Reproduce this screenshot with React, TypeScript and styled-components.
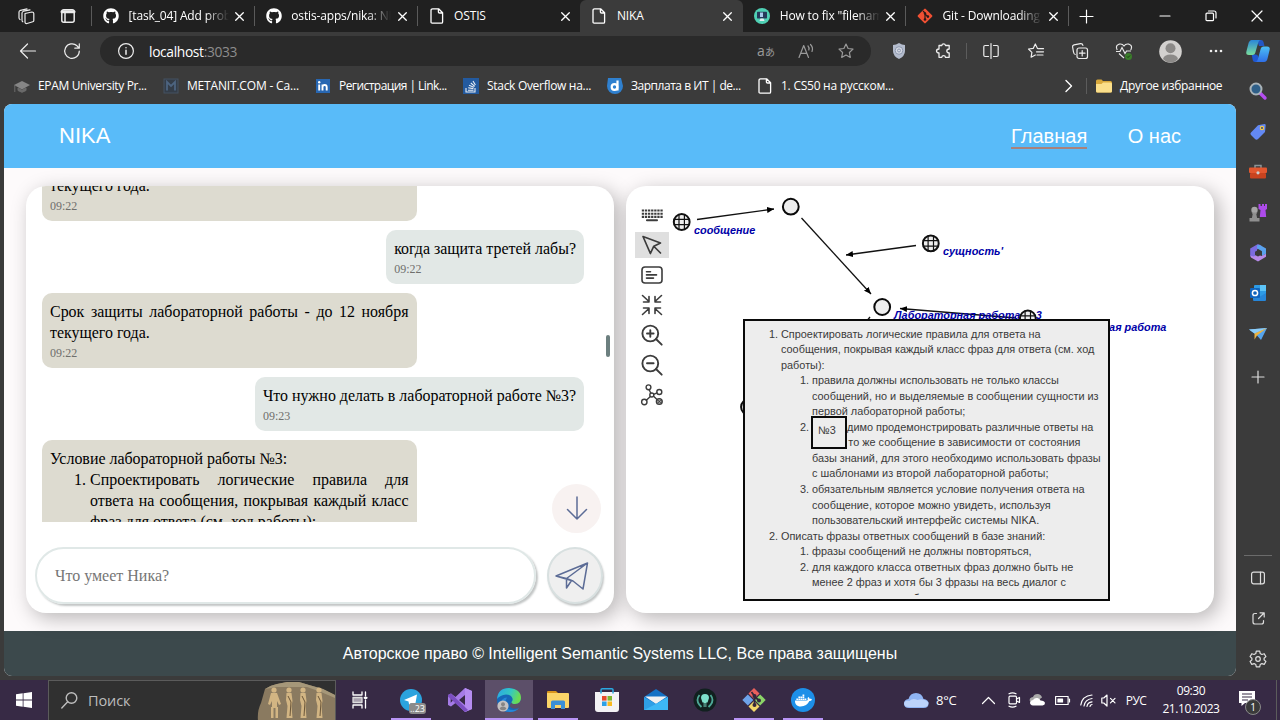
import React from "react";
import styled, { createGlobalStyle, css } from "styled-components";
import { FaGithub, FaDocker } from "react-icons/fa";

const ui = `"Open Sans", "Noto Sans", sans-serif`;
const sans = `"Liberation Sans", Arial, sans-serif`;
const serif = `"Liberation Serif", "Times New Roman", serif`;

const Global = createGlobalStyle`
  * { box-sizing: border-box; }
  body { margin: 0; background: #3b3b3b; overflow: hidden; }
  svg { display: block; flex: none; overflow: visible; }
`;

const Screen = styled.div`
  width: 1280px;
  height: 720px;
  display: flex;
  flex-direction: column;
  background: #3b3b3b;
  color: #fff;
  font-family: ${ui};
  overflow: hidden;
`;

const Line = styled.svg<{ $s?: number; $w?: number }>`
  width: ${(p) => p.$s ?? 16}px;
  height: ${(p) => p.$s ?? 16}px;
  fill: none;
  stroke: currentColor;
  stroke-width: ${(p) => p.$w ?? 1.2};
  stroke-linecap: round;
  stroke-linejoin: round;
`;

const Art = styled.svg<{ $s?: number }>`
  width: ${(p) => p.$s ?? 16}px;
  height: ${(p) => p.$s ?? 16}px;
`;

/* ---------- tab strip ---------- */

const TabStrip = styled.div`
  flex: none;
  height: 32px;
  display: flex;
  background: #202020;
`;

const StripTools = styled.div`
  width: 92px;
  padding-left: 18px;
  display: flex;
  align-items: center;
  gap: 26px;
  color: #ececec;
  border-right: 1px solid #202020;
`;

const Tab = styled.div<{ $active?: boolean; $divider?: boolean }>`
  position: relative;
  width: 162.8px;
  flex: none;
  padding: 0 8px 0 11px;
  display: flex;
  align-items: center;
  ${(p) =>
    p.$active &&
    css`
      background: #3b3b3b;
      border-radius: 6px 6px 0 0;
    `}
  &::before {
    content: "";
    position: absolute;
    left: -1px;
    top: 6px;
    width: 1px;
    height: 20px;
    background: ${(p) => (p.$divider ? "#5a5a5a" : "transparent")};
  }
`;

const TabTitle = styled.div<{ $fade?: boolean }>`
  width: 100px;
  margin: 0 6.5px 0 9.5px;
  font-size: 12px;
  line-height: 18px;
  letter-spacing: -0.15px;
  white-space: nowrap;
  overflow: hidden;
  ${(p) => p.$fade && css`mask-image: linear-gradient(90deg, #000 76px, transparent 100px);`}
`;

const NewTab = styled.div`
  width: 35px;
  display: flex;
  align-items: center;
  justify-content: center;
`;

const WindowControls = styled.div`
  margin-left: auto;
  display: flex;
  align-items: center;
`;

const Control = styled.div`
  width: 46px;
  display: flex;
  justify-content: center;
`;

/* ---------- browser body ---------- */

const BrowserBody = styled.div`
  flex: none;
  height: 648px;
  display: flex;
`;

const BrowserMain = styled.div`
  width: 1236px;
  flex: none;
  display: flex;
  flex-direction: column;
`;

const Toolbar = styled.div`
  height: 38px;
  flex: none;
  padding-left: 6px;
  display: flex;
  align-items: center;
  color: #ededed;
`;

const Slot = styled.div<{ $w?: number }>`
  width: ${(p) => p.$w ?? 44}px;
  flex: none;
  display: flex;
  justify-content: center;
  align-items: center;
`;

const Address = styled.div`
  width: 771px;
  height: 30px;
  margin: 0 6px;
  padding: 0 5px 0 18px;
  border-radius: 15px;
  background: #2a2a2a;
  display: flex;
  align-items: center;
  flex: none;
`;

const Url = styled.div`
  flex: 1;
  margin-left: 15px;
  font-size: 13.8px;
  letter-spacing: -0.35px;
  color: #fff;
  span { color: #8d8d8d; }
`;

const Dim = styled.div`
  display: flex;
  color: #9a9a9a;
`;

const Translate = styled.div`
  font-size: 14px;
  line-height: 16px;
  font-family: "Open Sans", "Noto Sans CJK JP", sans-serif;
  small { font-size: 10px; }
`;

const Divider = styled.div<{ $h: number; $m?: string }>`
  width: 1px;
  height: ${(p) => p.$h}px;
  margin: ${(p) => p.$m ?? "0"};
  background: #5c5c5c;
  flex: none;
`;

const Bookmarks = styled.div`
  height: 34px;
  flex: none;
  padding: 0 0 3px 14px;
  display: flex;
  align-items: center;
`;

const Bookmark = styled.div<{ $w?: number; $ls?: number }>`
  width: ${(p) => (p.$w ? p.$w + "px" : "auto")};
  display: flex;
  align-items: center;
  gap: 8px;
  flex: none;
  font-size: 12px;
  white-space: nowrap;
  letter-spacing: ${(p) => p.$ls ?? -0.25}px;
`;

const Overflow = styled.div`
  margin-left: auto;
  width: 173px;
  display: flex;
  align-items: center;
  flex: none;
`;

const SideBar = styled.div`
  width: 44px;
  display: flex;
  flex-direction: column;
  align-items: center;
  color: #dedede;
`;

const SideSlot = styled.div<{ $h?: number }>`
  height: ${(p) => p.$h ?? 40.3}px;
  flex: none;
  display: flex;
  align-items: center;
`;

const SideRule = styled.div`
  width: 28px;
  height: 1px;
  background: #6b6b6b;
  margin-top: auto;
`;

/* ---------- web page ---------- */

const Page = styled.div`
  margin-left: 4px;
  height: 572px;
  flex: none;
  border-radius: 8px;
  overflow: hidden;
  display: flex;
  flex-direction: column;
  background: #fdfafb;
  font-family: ${sans};
`;

const Header = styled.header`
  height: 64px;
  flex: none;
  padding: 0 55px;
  display: flex;
  align-items: center;
  justify-content: space-between;
  background: #59bbf9;
  font-size: 22px;
`;

const Brand = styled.div`
  letter-spacing: 0;
`;

const Nav = styled.nav`
  display: flex;
  gap: 40.5px;
  font-size: 20px;
`;

const NavLink = styled.a<{ $active?: boolean }>`
  height: 26px;
  line-height: 26px;
  border-bottom: 2px solid ${(p) => (p.$active ? "#a9827c" : "transparent")};
`;

const Content = styled.main`
  flex: 1;
  padding: 18px 22px;
  display: flex;
  gap: 12px;
`;

const Card = styled.section`
  position: relative;
  width: 588px;
  height: 427px;
  flex: none;
  border-radius: 20px;
  background: #fff;
  box-shadow: 5px 5px 20px rgba(0, 0, 0, 0.28);
  overflow: hidden;
`;

const ChatCard = styled(Card)`
  display: flex;
  flex-direction: column;
`;

const Messages = styled.div`
  height: 336px;
  flex: none;
  padding: 0 30px 0 16px;
  display: flex;
  flex-direction: column;
  justify-content: flex-start;
  gap: 9px;
  overflow: hidden;
  font-family: ${serif};
  color: #000;
`;

const Message = styled.div<{ $own?: boolean }>`
  flex: none;
  align-self: ${(p) => (p.$own ? "flex-end" : "flex-start")};
  width: ${(p) => (p.$own ? "auto" : "374.5px")};
  padding: 8px 8px 4px;
  border-radius: 10px;
  background: ${(p) => (p.$own ? "#e2e8e6" : "#dddbd0")};
  font-size: 15.95px;
  line-height: 21px;
  text-align: ${(p) => (p.$own ? "left" : "justify")};
  &:first-child { margin-top: -39.7px; }
  ol { margin: 0; padding-left: 40px; }
`;

const Time = styled.div`
  font-size: 12px;
  line-height: 21px;
  color: #6f6f6c;
`;

const ScrollThumb = styled.div`
  position: absolute;
  right: 4px;
  top: 149px;
  width: 4px;
  height: 22px;
  border-radius: 2px;
  background: #6c7f7f;
`;

const ScrollDown = styled.button`
  position: absolute;
  left: 526px;
  top: 297.5px;
  width: 49px;
  height: 49px;
  padding: 0;
  border: 0;
  border-radius: 50%;
  background: #f8f2f1;
  color: #5c6c96;
  display: flex;
  align-items: center;
  justify-content: center;
`;

const Composer = styled.form`
  margin-top: 25px;
  padding-left: 9px;
  display: flex;
  gap: 11px;
`;

const Field = styled.div`
  width: 501px;
  height: 57px;
  padding-left: 18px;
  border: 2px solid #e0e8e7;
  border-radius: 29px;
  box-shadow: 2px 2px 2px #c3c6c6;
  display: flex;
  align-items: center;
  font: 16px ${serif};
  color: #757575;
`;

const Send = styled.button`
  width: 56px;
  height: 57px;
  padding: 0 7px 0 0;
  border: 2px solid #d8e0e0;
  border-radius: 50%;
  background: #efefef;
  box-shadow: 1px 2px 2px #c3c6c6;
  color: #5c6c96;
  display: flex;
  align-items: center;
  justify-content: center;
`;

/* ---------- graph ---------- */

const Tools = styled.div`
  position: relative;
  width: 34px;
  margin: 16px 0 0 9px;
  display: flex;
  flex-direction: column;
  gap: 4px;
  color: #3c3c3c;
`;

const Tool = styled.div<{ $on?: boolean }>`
  height: 26px;
  display: flex;
  align-items: center;
  justify-content: center;
  background: ${(p) => (p.$on ? "#dfdfdf" : "transparent")};
`;

const Graph = styled.svg`
  position: absolute;
  left: 0;
  top: 0;
  width: 588px;
  height: 427px;
  font: italic bold 10.88px ${sans};
`;

const Window = styled.div<{ $x: number; $y: number; $w: number; $h: number }>`
  position: absolute;
  left: ${(p) => p.$x}px;
  top: ${(p) => p.$y}px;
  width: ${(p) => p.$w}px;
  height: ${(p) => p.$h}px;
  border: 2px solid #0a0a0a;
  background: #ededed;
  color: #3a3a3a;
  font-size: 10.88px;
  line-height: 15.54px;
  overflow: hidden;
`;

const WindowText = styled.div`
  height: 274px;
  padding-top: 5.500px;
  overflow: hidden;
  white-space: nowrap;
  ol { margin: 0; padding-left: 31px; }
  > ol { padding-left: 36px; }
`;

const SmallLabel = styled.div`
  padding: 5px 0 0 5px;
`;

const Footer = styled.footer`
  height: 45px;
  flex: none;
  display: flex;
  align-items: center;
  justify-content: center;
  background: #3c494c;
  font-size: 16px;
`;

/* ---------- taskbar ---------- */

const Taskbar = styled.div`
  height: 40px;
  flex: none;
  display: flex;
  align-items: center;
  background: #372a45;
`;

const Search = styled.div`
  width: 288px;
  height: 40px;
  padding-left: 12px;
  display: flex;
  align-items: center;
  background: #303030;
  border: 1px solid #5b5b5b;
  border-bottom: 0;
  color: #bdbdbd;
  font-size: 14.5px;
  letter-spacing: -0.1px;
  flex: none;
  overflow: hidden;
`;

const SearchLabel = styled.span`
  margin-left: 10px;
  flex: 1;
`;

const TaskApp = styled.div<{ $on?: boolean; $open?: boolean }>`
  width: 48px;
  height: 40px;
  margin-right: 1px;
  flex: none;
  display: flex;
  align-items: center;
  justify-content: center;
  position: relative;
  background: ${(p) => (p.$on ? "#5c4f69" : "transparent")};
  &::after {
    content: "";
    position: absolute;
    bottom: 0;
    left: ${(p) => (p.$on ? 0 : 4)}px;
    right: ${(p) => (p.$on ? 0 : 4)}px;
    height: 2px;
    background: ${(p) => (p.$open || p.$on ? "#b894f5" : "transparent")};
  }
`;

const Count = styled.div`
  position: absolute;
  right: 9px;
  bottom: 6px;
  padding: 0 1px;
  height: 11px;
  border-radius: 3px;
  background: #8b8b8b;
  font-size: 9px;
  line-height: 11px;
`;

const DockerDisc = styled.div`
  width: 24px;
  height: 24px;
  border-radius: 50%;
  background: #1d8fe8;
  display: flex;
  align-items: center;
  justify-content: center;
`;

const Tray = styled.div`
  margin-left: auto;
  width: 376px;
  height: 40px;
  display: flex;
  align-items: center;
  flex: none;
`;

const Temp = styled.div`
  width: 36px;
  margin-left: 7px;
  font-size: 13px;
  letter-spacing: -0.2px;
`;

const Lang = styled.div`
  width: 34px;
  text-align: center;
  font-size: 12px;
  letter-spacing: -0.6px;
`;

const Clock = styled.div`
  width: 76px;
  text-align: center;
  font-size: 12px;
  line-height: 18px;
  letter-spacing: -0.4px;
`;

const Notify = styled.div`
  position: relative;
  width: 20px;
  height: 20px;
  margin-left: 10px;
`;

const NotifyCount = styled.div`
  position: absolute;
  left: 6px;
  top: 9px;
  width: 16px;
  height: 16px;
  border-radius: 50%;
  border: 1px solid #8a8a8a;
  background: #3a3a3a;
  font-size: 10px;
  line-height: 14px;
  text-align: center;
`;

/* ---------- small icons ---------- */

const Close = () => (
  <Line $s={9} $w={1.3} viewBox="0 0 9 9"><path d="M.7.7l7.6 7.6M8.3.7L.7 8.3" /></Line>
);

const FileIcon = () => (
  <Line $w={1.3} viewBox="0 0 16 16"><path d="M3.6.8h6l4 4v9.2q0 1.2-1.2 1.2H3.2Q2 15.2 2 14V2.400Q2 .8 3.600.8zM9.400.8v3q0 1.200 1.200 1.200h3" /></Line>
);

const GitIcon = () => (
  <Art viewBox="0 0 16 16">
    <rect x="2.500" y="2.500" width="11" height="11" rx="1" fill="#f05033" transform="rotate(45 8 8)" />
    <path d="M6 3l2 2v6M8 6l2.800 2.600" stroke="#2a1a18" strokeWidth="1.200" fill="none" />
    <circle cx="8" cy="11.500" r="1.300" fill="#2a1a18" /><circle cx="8" cy="5.500" r="1.200" fill="#2a1a18" /><circle cx="10.900" cy="8.600" r="1.300" fill="#2a1a18" />
  </Art>
);

const MonitorIcon = () => (
  <Art viewBox="0 0 16 16">
    <circle cx="8" cy="8" r="8" fill="#4fd0b4" />
    <rect x="3" y="3.800" width="10" height="6.600" rx=".6" fill="#263a5a" />
    <rect x="6" y="4.500" width="3" height="4.500" fill="#a6c9ea" />
    <path d="M5.500 13h5l-1-2.400h-3z" fill="#e7eef2" />
  </Art>
);

const Folder = () => (
  <Art viewBox="0 0 16 16">
    <path d="M0 3q0-1.500 1.500-1.500h4L7 3h7.500Q16 3 16 4.500V13q0 1.500-1.500 1.500h-13Q0 14.500 0 13z" fill="#d9a93c" />
    <path d="M0 6h5.500L7 4.500h7.500Q16 4.500 16 6v7q0 1.500-1.500 1.500h-13Q0 14.500 0 13z" fill="#fbdf8b" />
  </Art>
);

const Star = () => (
  <Line viewBox="0 0 16 16"><path d="M8 1l2.100 4.500 4.900.6-3.600 3.400.9 4.900L8 12l-4.300 2.400.9-4.900L1 6.100l4.900-.6z" /></Line>
);

const GlobeNode = ({ x, y }: { x: number; y: number }) => (
  <g stroke="#111" fill="none">
    <circle cx={x} cy={y} r="7.900" strokeWidth="2" fill="#eee" />
    <path d={`M${x - 8} ${y - 2.700}h16M${x - 8} ${y + 2.700}h16M${x - 2.700} ${y - 8}v16M${x + 2.700} ${y - 8}v16`} strokeWidth="1.200" />
  </g>
);

const RingNode = ({ x, y }: { x: number; y: number }) => (
  <circle cx={x} cy={y} r="7.900" stroke="#0a0a0a" strokeWidth="2" fill="#eee" />
);

const tabs = [
  { icon: <FaGithub size={16} />, title: "[task_04] Add problem", fade: true, divider: true },
  { icon: <FaGithub size={16} />, title: "ostis-apps/nika: NIKA", fade: true, divider: true },
  { icon: <FileIcon />, title: "OSTIS", divider: true },
  { icon: <FileIcon />, title: "NIKA", active: true },
  { icon: <MonitorIcon />, title: "How to fix \"filename", fade: true },
  { icon: <GitIcon />, title: "Git - Downloading P", fade: true, divider: true },
];

const Sidebar = () => (
  <SideBar>
    <SideSlot $h={38}>
      <Art $s={24} viewBox="0 0 24 24">
        <defs>
          <linearGradient id="cpA" x1="0" y1="0" x2="0" y2="1"><stop offset="0" stopColor="#2a86d8" /><stop offset="1" stopColor="#7ade9c" /></linearGradient>
          <linearGradient id="cpB" x1="0" y1="0" x2="0" y2="1"><stop offset="0" stopColor="#4cc0f5" /><stop offset="1" stopColor="#2f6fe8" /></linearGradient>
        </defs>
        <path d="M11 1h4q2 0 2.500 2l1 4h-5.500z" fill="#2357c4" />
        <path d="M13 23H9q-2 0-2.300-2l-1-5.500h4q2 0 2.500 2z" fill="#1f57cf" />
        <path d="M6 1h9q-2 0-2.600 2l-3.200 11q-.6 2-2.700 2H3q-3.500 0-2.600-3.500l1.800-7Q3 1 6 1z" fill="url(#cpA)" />
        <path d="M18 23H9q2 0 2.600-2l3.200-11.500q.6-2 2.700-2H21q3.500 0 2.600 3.500l-1.800 7.500Q21 23 18 23z" fill="url(#cpB)" />
      </Art>
    </SideSlot>
    <SideSlot $h={42}>
      <Art $s={18} viewBox="0 0 18 18">
        <path d="M11 11l5 5" stroke="#b44df0" strokeWidth="3.400" strokeLinecap="round" />
        <circle cx="7" cy="7" r="5.500" fill="#2f5f88" stroke="#a9b3b8" strokeWidth="2" />
      </Art>
    </SideSlot>
    <SideSlot>
      <Art $s={18} viewBox="0 0 18 18">
        <path d="M2 9.500L9 2.300 15.500 1q1.200 0 1.200 1.200L16 9 9 16q-1.500 1.300-3 0l-4-4q-1.300-1.200 0-2.500z" fill="#6389f4" />
        <circle cx="13" cy="5" r="1.700" fill="#44507a" stroke="#f2c94a" strokeWidth="1.200" />
      </Art>
    </SideSlot>
    <SideSlot>
      <Art $s={18} viewBox="0 0 18 18">
        <path d="M6 5V2.500h6V5" fill="none" stroke="#8c9497" strokeWidth="1.500" />
        <rect x="0" y="4.500" width="18" height="5.500" rx="1" fill="#e2572f" />
        <rect x="1" y="10" width="16" height="5.500" rx="1" fill="#c8431f" />
        <circle cx="9" cy="9.800" r="1.600" fill="#c9cdce" />
      </Art>
    </SideSlot>
    <SideSlot>
      <Art $s={18} viewBox="0 0 18 18">
        <path d="M9.500 0h2v2h1.500V0h2v2h1V0h2v5l-1.500 1 .7 7h-6.400l.7-7-2-1z" fill="#ad4bea" />
        <circle cx="5.500" cy="6" r="3.200" fill="#a5a5a5" /><path d="M2.500 8.500h6l-1.200 1.500.8 4h2.400v3.500H.5V14h2.400l.8-4z" fill="#8f8f8f" />
      </Art>
    </SideSlot>
    <SideSlot>
      <Art $s={18} viewBox="0 0 18 18">
        <path d="M9 0l4 2.200-5 3.200v6.800l-3.600 2.300L1.200 12V4.600z" fill="#7c6be0" />
        <path d="M10.500.8L17 4.600v5.200l-4 2.200V7.200L8 4.300V1.600z" fill="#5aa2ee" />
        <path d="M1.200 11.500l3.400 1 4.400-2.300 3.500 1.800L17 9.800v3L9 17.500l-7-4z" fill="#b78ae8" />
        <path d="M9 6l3 1.700v3.200L9 12.500l-3-1.600V7.700z" fill="#3b3b3b" />
      </Art>
    </SideSlot>
    <SideSlot>
      <Art $s={18} viewBox="0 0 18 18">
        <rect x="5" y="1" width="12" height="13" rx="1" fill="#2d9be6" /><path d="M11 1h6v6h-6z" fill="#5cc4f8" />
        <path d="M4 9.500l7 3L17 9v7q0 1-1 1H5q-1 0-1-1z" fill="#2686d9" />
        <rect x="1" y="4" width="10" height="10" rx="1" fill="#1064bd" /><circle cx="6" cy="9" r="2.600" fill="none" stroke="#fff" strokeWidth="1.500" />
      </Art>
    </SideSlot>
    <SideSlot>
      <Art $s={18} viewBox="0 0 18 18">
        <path d="M0 4.500L18 3 12 15 8 10.500z" fill="#56a4ed" /><path d="M18 3L5.500 8.500 0 4.500z" fill="#8ccdf8" />
        <path d="M18 3L5.500 8.500v6L8 10.500z" fill="#eeb43e" />
      </Art>
    </SideSlot>
    <SideSlot $h={46}>
      <Line $s={12} viewBox="0 0 12 12"><path d="M6 0v12M0 6h12" /></Line>
    </SideSlot>
    <SideRule />
    <SideSlot $h={44}>
      <Line $s={14} viewBox="0 0 14 14"><rect x=".6" y="1.200" width="12.800" height="11.600" rx="2" /><path d="M9.500 1.200v11.600" /></Line>
    </SideSlot>
    <SideSlot $h={37}>
      <Line $s={13} viewBox="0 0 13 13"><path d="M4.500 1.500H3Q1 1.500 1 3.500v6.500q0 2 2 2h6.500q2 0 2-2V8.500M8 .8h4.200V5M12 1L6.500 6.500" /></Line>
    </SideSlot>
    <SideSlot $h={43}>
      <Line $s={18} viewBox="0 0 18 18"><path d="M7.300 1.200h3.400l.5 2.300 1.700 1 2.300-.8 1.700 2.900L15.100 8.200v1.700l1.800 1.600-1.700 2.900-2.300-.8-1.700 1-.5 2.300H7.300l-.5-2.300-1.700-1-2.300.8-1.700-2.900 1.800-1.600V8.200L1.100 6.600l1.700-2.900 2.300.8 1.700-1z" /><circle cx="9" cy="9" r="2.300" /></Line>
    </SideSlot>
  </SideBar>
);

const Chat = () => (
  <ChatCard>
    <Messages>
      <Message>Срок защиты лабораторной работы - до 12 ноября текущего года.<Time>09:22</Time></Message>
      <Message $own>когда защита третей лабы?<Time>09:22</Time></Message>
      <Message>Срок защиты лабораторной работы - до 12 ноября текущего года.<Time>09:22</Time></Message>
      <Message $own>Что нужно делать в лабораторной работе №3?<Time>09:23</Time></Message>
      <Message>
        Условие лабораторной работы №3:
        <ol><li>Спроектировать логические правила для ответа на сообщения, покрывая каждый класс фраз для ответа (см. ход работы):</li></ol>
      </Message>
    </Messages>
    <ScrollThumb />
    <ScrollDown>
      <Line $s={24} $w={1.5} viewBox="0 0 24 24"><path d="M12 1v22M2.500 13.500L12 23l9.500-9.500" /></Line>
    </ScrollDown>
    <Composer>
      <Field>Что умеет Ника?</Field>
      <Send type="button">
        <Line $s={34} $w={1.500} viewBox="0 0 34 34"><path d="M1 17L32.500 4 28 30 18 22zM1 17l10.500 2.500L32.500 4M11.500 19.500v9.500l4.700-7M11.500 19.500L18 22" /></Line>
      </Send>
    </Composer>
  </ChatCard>
);

const GraphView = () => (
  <Card>
    <Graph viewBox="626 186 588 427">
      <defs>
        <marker id="tip" viewBox="0 0 7 6" refX="7" refY="3" markerWidth="7" markerHeight="6" markerUnits="userSpaceOnUse" orient="auto"><path d="M0 0l7 3-7 3z" /></marker>
      </defs>
      <g stroke="#111" strokeWidth="1.300">
        <path d="M697 219.500L774 209" markerEnd="url(#tip)" />
        <path d="M801.500 218L871 294" markerEnd="url(#tip)" />
        <path d="M916 245.500L846 255" markerEnd="url(#tip)" />
        <path d="M1016 318L900 308.500" markerEnd="url(#tip)" />
        <path d="M870 317l-4 5" />
      </g>
      <GlobeNode x={681.700} y={222} />
      <RingNode x={790.800} y={206.700} />
      <GlobeNode x={930.800} y={243.400} />
      <RingNode x={882.200} y={307} />
      <g fill="#0000a8">
        <text x="694" y="234">сообщение</text>
        <text x="943" y="255">сущность'</text>
        <text x="894" y="319">Лабораторная работа №3</text>
        <text x="1040" y="331">Лабораторная работа</text>
      </g>
      <GlobeNode x={1027.800} y={318.500} />
      <RingNode x={749} y={407} />
    </Graph>
    <Tools>
      <Tool>
        <Line $s={22} $w={2.100} viewBox="0 0 22 22"><path strokeLinecap="butt" strokeDasharray="2.300 .8" d="M.8 6.500h21M.8 9.700h21M.8 12.900h21" style={{ strokeLinecap: "butt" }} /><path d="M6 16.200h10" /></Line>
      </Tool>
      <Tool $on>
        <Line $s={22} $w={1.700} viewBox="0 0 22 22"><path d="M2 2.500l17.500 6.500-6.700 3.200-3.400 7.300zM13 12.500l6.500 6.500" /></Line>
      </Tool>
      <Tool>
        <Line $s={22} $w={1.600} viewBox="0 0 22 22"><rect x="1" y="3" width="20" height="16" rx="3" /><path d="M5.500 7.700h4M5.500 10.900h10M5.500 14.100h7" /></Line>
      </Tool>
      <Tool>
        <Line $s={22} $w={1.600} viewBox="0 0 22 22"><path d="M1.500 1.500l6.500 6M8 2.500v5.500H2.500M20.500 1.500l-6.500 6M14 2.500v5.500h5.500M1.500 20.500l6.500-6M8 19.500V14H2.500M20.500 20.500l-6.500-6M14 19.500V14h5.500" /></Line>
      </Tool>
      <Tool>
        <Line $s={22} $w={1.900} viewBox="0 0 22 22"><circle cx="9.300" cy="9.500" r="7.900" /><path d="M15 15l5.700 5.700M6 9.500h6.600M9.300 6.200v6.600" /></Line>
      </Tool>
      <Tool>
        <Line $s={22} $w={1.900} viewBox="0 0 22 22"><circle cx="9.300" cy="9.500" r="7.900" /><path d="M15 15l5.700 5.700M6 9.300h6.600" /></Line>
      </Tool>
      <Tool>
        <Line $s={22} $w={1.400} viewBox="0 0 22 22"><circle cx="7.500" cy="3.300" r="2.400" /><circle cx="18.300" cy="8" r="2.500" /><circle cx="3.300" cy="18" r="2.700" /><circle cx="18.300" cy="17.500" r="2.900" fill="#a5a5a5" /><circle cx="10.800" cy="11" r="2" /><path d="M8.200 5.700l1.600 3.500M12.700 10.300l3.200-1.400M9.400 12.400L5.300 16.200M12.600 12.200l3.700 3.500" /><path d="M17.200 16.400l2.200 2.200M19.400 16.400l-2.200 2.200" strokeWidth="1" /></Line>
      </Tool>
    </Tools>
    <Window $x={117} $y={133} $w={367} $h={282}>
      <WindowText>
        <ol>
          <li>
            Спроектировать логические правила для ответа на<br />сообщения, покрывая каждый класс фраз для ответа (см. ход<br />работы):
            <ol>
              <li>правила должны использовать не только классы<br />сообщений, но и выделяемые в сообщении сущности из<br />первой лабораторной работы;</li>
              <li>необходимо продемонстрировать различные ответы на<br />одно и то же сообщение в зависимости от состояния<br />базы знаний, для этого необходимо использовать фразы<br />с шаблонами из второй лабораторной работы;</li>
              <li>обязательным является условие получения ответа на<br />сообщение, которое можно увидеть, используя<br />пользовательский интерфейс системы NIKA.</li>
            </ol>
          </li>
          <li>
            Описать фразы ответных сообщений в базе знаний:
            <ol>
              <li>фразы сообщений не должны повторяться,</li>
              <li>для каждого класса ответных фраз должно быть не<br />менее 2 фраз и хотя бы 3 фразы на весь диалог с<br />использованием шаблонов</li>
            </ol>
          </li>
        </ol>
      </WindowText>
    </Window>
    <Window $x={185} $y={230} $w={36} $h={33}><SmallLabel>№3</SmallLabel></Window>
  </Card>
);

const Relief = () => (
  <svg width="78" height="40" viewBox="0 0 78 40">
    <path d="M1 40Q0 30 4 22L8 8Q14 4 20 3l10-2h12l10 3 14 4 12 6v26z" fill="#8a7a60" />
    <path d="M8 8Q14 4 20 3l10-2h12l10 3 14 4 12 6v3L64 11 50 6H20z" fill="#a59779" />
    {[17, 32, 46, 62].map((x, i) => (
      <g key={x} fill="#d2b583">
        <circle cx={x} cy="9" r="2.600" />
        <path d={i === 0 ? `M${x - 3} 12h6l4 11-2 1-2-4v6h1v11h-2.500V27h-2v10h-2.500V26h1v-6l-2 4-2-1z` : `M${x - 2.500} 12h5l1 8-1 5 1 12h-6l1-12-1.500-6z`} />
        {i > 0 && <path d={`M${x - 1} 15l3 6-1 14`} stroke="#6b5639" fill="none" />}
      </g>
    ))}
  </svg>
);

const TaskbarView = () => (
  <Taskbar>
    <Slot $w={48}>
      <Art viewBox="0 0 16 16"><path fill="#fff" d="M0 2.200L6.700 1.300v6.300H0zM7.500 1.200L16 0v7.600H7.500zM0 8.400h6.700v6.300L0 13.800zM7.500 8.400H16V16l-8.500-1.200z" /></Art>
    </Slot>
    <Search>
      <Line $s={17} $w={1.400} viewBox="0 0 17 17"><circle cx="10.500" cy="6" r="5.300" /><path d="M6.700 9.800L.8 16" /></Line>
      <SearchLabel>Поиск</SearchLabel>
      <Relief />
    </Search>
    <Slot $w={48}>
      <Line $w={1.300} viewBox="0 0 16 16"><path d="M1 0v3h9V0M1 16v-3h9v3M13.500 0v4M13.500 8v8" /><rect x="1" y="5.500" width="9" height="5" fill="#a8a1ae" stroke="#ddd" /><path d="M12.700 5.800h1.800" strokeWidth="2.200" /></Line>
    </Slot>
    <Slot $w={3} />
    <TaskApp $open>
      <Art $s={22} viewBox="0 0 22 22"><circle cx="11" cy="11" r="11" fill="#2ba3de" /><path d="M4 11L17 5.500 15 17l-4-3-1.800 2-.7-3.500z" fill="#fff" /></Art>
      <Count>..23</Count>
    </TaskApp>
    <TaskApp>
      <Art $s={24} viewBox="0 0 24 24"><path d="M17 0l7 3v18l-7 3L7.500 15 3 18.500 0 17V7l3-1.500L7.500 9zM17 7l-6 5 6 5zM2.700 9.300v5.400L5.400 12z" fill="#a57be6" fillRule="evenodd" /><path d="M17 0l7 3v18l-7 3z" fill="#b58cf0" /><path d="M0 7l3-1.500L20 22l-3 2L0 8.500z" fill="#7b4fc0" /></Art>
    </TaskApp>
    <TaskApp $on>
      <Art $s={24} viewBox="0 0 24 24">
        <defs><linearGradient id="eg" x1="0" y1="0" x2="1" y2=".3"><stop offset="0" stopColor="#2aa5e8" /><stop offset=".6" stopColor="#35c8c0" /><stop offset="1" stopColor="#6bdc53" /></linearGradient></defs>
        <circle cx="12" cy="12" r="12" fill="#1667b8" />
        <path d="M14.500 14q0 2 3.500 2 6-.5 6-6 1.500 7-3 10-6 2-8.500-2z" fill="#5c4f69" />
        <path d="M0 11Q1 0 12 0q12 1 12 10 0 5.500-6 6-3.500 0-3.500-2 1.500-1.300 1-3.500Q14.500 6.500 9 6.500 3 7 0 11z" fill="url(#eg)" />
        <path d="M8.500 15q0 7 8 7 3 0 5.500-2-3 4-9 4-9 0-9.500-8Q4 10 10 9.500q-1.500 2-1.500 5.500z" fill="#2487d8" />
        <circle cx="6" cy="18" r="5.600" fill="#c4c2c2" /><circle cx="6" cy="16.300" r="2" fill="#858585" /><path d="M2.700 21q.3-2.500 3.300-2.500T9.300 21Q6 23.500 2.700 21z" fill="#858585" />
      </Art>
    </TaskApp>
    <TaskApp $open>
      <Art $s={22} viewBox="0 0 22 22"><path d="M0 3q0-1 1-1h8l2 2H0z" fill="#d9961c" /><path d="M0 4h21q1 0 1 1v13q0 1-1 1H1q-1 0-1-1z" fill="#fbd568" /><path d="M4 20v-7q0-1.500 1.500-1.500h11Q18 11.500 18 13v7h-4v-4H8v4z" fill="#3a8fd6" /></Art>
    </TaskApp>
    <TaskApp>
      <Art $s={24} viewBox="0 0 24 24"><path d="M0 4h24v17q0 3-3 3H3q-3 0-3-3z" fill="#f3f2f4" /><path d="M6 5.500V2q0-1.300 1.300-1.300h9.400Q18 .7 18 2v3.500" fill="none" stroke="#2ba9e0" strokeWidth="1.500" /><path d="M7 8h4.600v4.600H7z" fill="#e64a2b" /><path d="M12.500 8H17v4.600h-4.500z" fill="#7db72f" /><path d="M7 13.500h4.600V18H7z" fill="#2da0e6" /><path d="M12.500 13.500H17V18h-4.500z" fill="#f9b91e" /></Art>
    </TaskApp>
    <TaskApp>
      <Art $s={24} viewBox="0 0 24 24"><path d="M0 9L12 1l12 8v13H0z" fill="#1471c4" /><path d="M1 8.500h22L12 16z" fill="#f1f1f1" /><path d="M0 9l12 7 12-7v13H0z" fill="#2f9fe6" /><path d="M0 22l12-6 12-7v13z" fill="#3db7f5" /></Art>
    </TaskApp>
    <TaskApp>
      <Art $s={24} viewBox="0 0 24 24"><circle cx="12" cy="12" r="11.500" fill="#11201f" /><path d="M12 6q4 0 4 4l-1.500 4.500h-1.200V19h-.8v-4h-1v4h-.8v-4.500H9.500L8 10q0-4 4-4z" fill="#7ee0cb" /><path d="M6.500 7q-4 5 0 10l2 2M17.500 7q4 5 0 10l-2 2" fill="none" stroke="#4ea897" strokeWidth="1.800" /></Art>
    </TaskApp>
    <TaskApp $open>
      <Art $s={24} viewBox="0 0 24 24">
        <path d="M12 0l5.500 5.500L12 11 6.500 5.500z" fill="#e9605c" /><path d="M5.800 6.500L11.300 12l-5.500 5.500L.3 12z" fill="#6ea3ea" />
        <path d="M18.200 6.500l5.500 5.500-5.500 5.500-5.500-5.500z" fill="#8bd468" /><path d="M12 13l5.500 5.500L12 24l-5.500-5.500z" fill="#f2d76a" />
        <path d="M9.500 4l3 4v9M12.500 8.500l4.500 4" stroke="#33283c" strokeWidth="1.800" fill="none" /><circle cx="12.500" cy="8" r="2" fill="#33283c" /><circle cx="12.500" cy="17" r="2" fill="#33283c" /><circle cx="17" cy="12.500" r="2" fill="#33283c" />
      </Art>
    </TaskApp>
    <TaskApp $open>
      <DockerDisc><FaDocker size={17} /></DockerDisc>
    </TaskApp>
    <Tray>
      <Slot $w={25}><Art $s={25} viewBox="0 0 25 25"><path d="M5 20q-5 0-5-4.500 0-4 4.500-4.500Q6 5 12 5t7.500 6Q24.500 11.500 24.500 15.500q0 4.500-5 4.500z" fill="#8fb4f3" /><path d="M5 19q-5 0-5-4 1-3 5.500-2 3-3.500 8-1 6-2.500 11 2.500 0 4.500-5 4.500z" fill="#bcd3fa" /></Art></Slot>
      <Temp>8°C</Temp>
      <Slot $w={32}><Line $s={13} viewBox="0 0 13 13"><path d="M.5 9.500l6-6 6 6" /></Line></Slot>
      <Slot $w={20}><Line $s={14} viewBox="0 0 14 14"><rect x="2" y="3.200" width="7.500" height="7.600" rx="1" /><path d="M9.500 6l3-1.500v5l-3-1.500M2 .8Q5.500-1 9 .8M2 13.200q3.500 1.800 7 0" /></Line></Slot>
      <Slot $w={26}><Art viewBox="0 0 16 16"><path d="M2 10q-2-1-1-3.500Q2 5 4 5q1-3 4.500-3Q12 2 13 5.500L8 9z" fill="#aaa" /><path d="M4 13.500q-3-.5-3-3 .5-2.500 3-2.500Q5.500 5.500 8.500 6q2.500.5 3 2.500 4 0 4.500 2.500 0 2-2.500 2.500z" fill="#fff" /></Art></Slot>
      <Slot $w={24}><Line $s={15} viewBox="0 0 15 15"><rect x=".6" y="3.500" width="12.500" height="8" /><path d="M3 6h4.500v3H3z" fill="#fff" /><path d="M14.500 6v3" /></Line></Slot>
      <Slot $w={24}><Line $s={13} viewBox="0 0 13 13"><path d="M.8 11Q2 2 12 1M4 12Q5 5.500 12 4.500M7 12.300q.5-4 5-4.500M10 12.300q.2-1.500 2-1.800" /></Line></Slot>
      <Slot $w={21}><Line $s={15} viewBox="0 0 15 15"><path d="M.8 5v5h2L6 13V2L2.800 5zM9.500 5.300l4.500 4.500M14 5.300L9.500 9.800" /></Line></Slot>
      <Lang>РУС</Lang>
      <Clock>09:30<br />21.10.2023</Clock>
      <Notify>
        <Art $s={17} viewBox="0 0 17 17"><path d="M0 1h16v12H6l-3.500 3V13H0z" fill="#fff" /><path d="M3 4h10M3 7h10M3 10h6" stroke="#372a45" strokeWidth="1.200" /></Art>
        <NotifyCount>1</NotifyCount>
      </Notify>
      <Divider $h={40} $m="0 3px 0 auto" />
    </Tray>
  </Taskbar>
);

export default function App() {
  return (
    <Screen>
      <Global />
      <TabStrip>
        <StripTools>
          <Line $s={17} $w={1.200} viewBox="0 0 17 17"><path d="M7 5.500l7-1.500q1.800 0 1.800 1.500v7q0 1-1 1.300L9 15.500q-2 .3-2-1.500zM4.800 13.800Q4 13.500 4 12V5q0-1.300 1.500-1.800L12 1.800M2 11.500Q1 11 1 9.800V4Q1 2.800 2.500 2.300L9 .9" /></Line>
          <Line $s={14} $w={1.500} viewBox="0 0 14 14"><rect x=".8" y=".8" width="12.400" height="12.400" rx="2" /><path d="M1 2.800h12" strokeWidth="3" /><path d="M4 4v9" /></Line>
        </StripTools>
        {tabs.map((t, i) => (
          <Tab key={i} $active={t.active} $divider={t.divider}>
            {t.icon}
            <TabTitle $fade={t.fade}>{t.title}</TabTitle>
            <Close />
          </Tab>
        ))}
        <Divider $h={20} $m="6px 0 0 -1px" />
        <NewTab><Line $s={13} viewBox="0 0 13 13"><path d="M6.500 0v13M0 6.500h13" /></Line></NewTab>
        <WindowControls>
          <Control><Line $s={10} viewBox="0 0 10 10"><path d="M0 5h10" /></Line></Control>
          <Control><Line $s={10} viewBox="0 0 10 10"><rect x="0" y="2.200" width="7.500" height="7.500" rx="1" /><path d="M2.500 0H8q2 0 2 2v5" /></Line></Control>
          <Control><Line $s={10} viewBox="0 0 10 10"><path d="M0 0l10 10M10 0L0 10" /></Line></Control>
        </WindowControls>
      </TabStrip>
      <BrowserBody>
        <BrowserMain>
          <Toolbar>
            <Slot><Line viewBox="0 0 16 16"><path d="M15.500 8H.5M7.500 1L.5 8l7 7" /></Line></Slot>
            <Slot><Line viewBox="0 0 16 16"><path d="M15.300 8A7.300 7.300 0 1 1 13 2.800L15 5M15.300 .8V5.200h-4.500" /></Line></Slot>
            <Address>
              <Line viewBox="0 0 16 16"><circle cx="8" cy="8" r="7.400" /><path d="M8 7.300v4M8 4.700v.1" strokeWidth="1.500" /></Line>
              <Url>localhost<span>:3033</span></Url>
              <Dim>
                <Slot $w={40}><Translate>a<small>あ</small></Translate></Slot>
                <Slot $w={40}><Line viewBox="0 0 16 16"><path d="M1 14.500L5.700 2.500l4.800 12M2.600 10.300h6.300M10 3q1.500 1.500.8 4M12.500 1.500q3 3 1.500 7" /></Line></Slot>
                <Slot $w={40}><Star /></Slot>
              </Dim>
            </Address>
            <Slot><Art viewBox="0 0 16 16"><path d="M8 0q3 2 6 2v6q0 5-6 8-6-3-6-8V2q3 0 6-2z" fill="#b4bccd" /><circle cx="8" cy="7.500" r="3.800" fill="#d6dae4" stroke="#8e99b0" /><circle cx="8" cy="7.500" r="1.500" fill="none" stroke="#8e99b0" /></Art></Slot>
            <Slot><Line $w={1.300} viewBox="0 0 16 16"><path d="M4 2.500h2.800Q7 .8 8.600.8t1.900 1.700h3.700V6q-2.400.2-2.400 2t2.400 2v4.300h-3.700q-.2-1.600-1.900-1.600t-1.800 1.600H4V10Q1.500 9.800 1.500 8T4 6z" /></Line></Slot>
            <Divider $h={16} $m="0 2px 0 1px" />
            <Slot><Line viewBox="0 0 16 16"><path d="M5.500 2.500H2Q.8 2.500.8 3.700v8.600q0 1.200 1.200 1.200h3.500M10.500 2.500H14q1.200 0 1.200 1.200v8.600q0 1.200-1.200 1.200h-3.500M8 .5v15" /></Line></Slot>
            <Slot $w={46}><Line viewBox="0 0 16 16"><path d="M9.500 5.500L7.300 1 5.200 5.400.5 6l3.400 3.400-.8 4.800L7.300 12M9 12h6M8.500 8.800h7M10.500 5.700h5" /></Line></Slot>
            <Slot $w={42}><Line viewBox="0 0 16 16"><rect x="5" y="5" width="10.500" height="10.500" rx="2" /><path d="M10.200 7.500v5.500M7.500 10.200H13M3.200 11.500Q2 11.500 1.500 9L.6 4Q.3 2.200 2 1.800L8.500.6q2-.2 2.400 1.800" /></Line></Slot>
            <Slot $w={46}><Art viewBox="0 0 16 16"><path d="M1.200 7Q-1 2.500 3 1.200 6.300.4 8 3 9.700.4 13 1.200 17 2.500 14.800 7M0 8.500h4l2-4 3 6 1.500-2.500H15M3 10.500l5 4.500" fill="none" stroke="#e8e8e8" strokeWidth="1.200" /><circle cx="12.500" cy="13.500" r="3.500" fill="#3b7d2b" /><path d="M11 13.500l1 1 2-2" stroke="#1a3a14" fill="none" /></Art></Slot>
            <Slot $w={46}><Art $s={23} viewBox="0 0 23 23"><circle cx="11.500" cy="11.500" r="11.300" fill="#d3d1cf" /><circle cx="11.500" cy="8.300" r="5" fill="#8c8a88" /><path d="M4 19q1-4.500 7.500-4.500T19 19q-3 3.500-7.500 3.500T4 19z" fill="#8c8a88" /></Art></Slot>
            <Slot $w={46}><Art viewBox="0 0 16 16" fill="#eee"><circle cx="3" cy="8" r="1.300" /><circle cx="8" cy="8" r="1.300" /><circle cx="13" cy="8" r="1.300" /></Art></Slot>
          </Toolbar>
          <Bookmarks>
            <Bookmark $w={149} $ls={-0.35}><Art viewBox="0 0 16 16"><path d="M8 3l8 4-8 4.500L0 7z" fill="#858585" /><path d="M4 10l4 2.300 4-2.300v2.500l-4 1.800-4-1.800zM.8 7v7" fill="#6b6b6b" stroke="#6b6b6b" /></Art>EPAM University Pr...</Bookmark>
            <Bookmark $w={152} $ls={-0.18}><Art viewBox="0 0 16 16"><rect x="1" y="1" width="14" height="14" fill="#343d48" stroke="#445262" /><path d="M4 12.500V4l4 4 4-4v8.500" fill="none" stroke="#4d6480" strokeWidth="1.800" /></Art>METANIT.COM - Ca...</Bookmark>
            <Bookmark $w={148} $ls={-0.55}><Art viewBox="0 0 16 16"><rect x="1" y="1" width="14" height="14" fill="#2867b2" /><path d="M4.200 6.500v6M7.500 12.500v-6M7.500 9q0-2 2.200-2 2 0 2 2v3.500" fill="none" stroke="#fff" strokeWidth="1.900" /><circle cx="4.200" cy="4.200" r="1.200" fill="#fff" /></Art>Регистрация | Link...</Bookmark>
            <Bookmark $w={144} $ls={-0.3}><Art viewBox="0 0 16 16"><rect width="16" height="16" fill="#235a9f" /><path d="M3 10v4h9v-4M5 12.200h5.500M5.200 9.800l5.200.8M6 7.300l4.900 2M7.800 5l4 3.300M10 3l2.400 4" fill="none" stroke="#e9eef5" strokeWidth="1.100" /></Art>Stack Overflow на...</Bookmark>
            <Bookmark $w={150} $ls={-0.47}><Art viewBox="0 0 16 16"><path d="M1 0h13l2 8a8 8 0 0 1-16 0z" fill="#2f80cf" /><circle cx="7.500" cy="9" r="2.800" fill="none" stroke="#fff" strokeWidth="2.200" /><path d="M10.500 2.500v10" stroke="#fff" strokeWidth="2.200" /></Art>Зарплата в ИТ | de...</Bookmark>
            <Bookmark><FileIcon />1. CS50 на русском...</Bookmark>
            <Overflow>
              <Slot $w={12}><Line $s={12} $w={1.400} viewBox="0 0 12 12"><path d="M3 .5L8.500 6 3 11.500" /></Line></Slot>
              <Divider $h={16} $m="0 9px 0 11px" />
              <Bookmark $ls={-0.33}><Folder />Другое избранное</Bookmark>
            </Overflow>
          </Bookmarks>
          <Page>
            <Header>
              <Brand>NIKA</Brand>
              <Nav><NavLink $active>Главная</NavLink><NavLink>О нас</NavLink></Nav>
            </Header>
            <Content>
              <Chat />
              <GraphView />
            </Content>
            <Footer>Авторское право © Intelligent Semantic Systems LLC, Все права защищены</Footer>
          </Page>
        </BrowserMain>
        <Sidebar />
      </BrowserBody>
      <TaskbarView />
    </Screen>
  );
}
